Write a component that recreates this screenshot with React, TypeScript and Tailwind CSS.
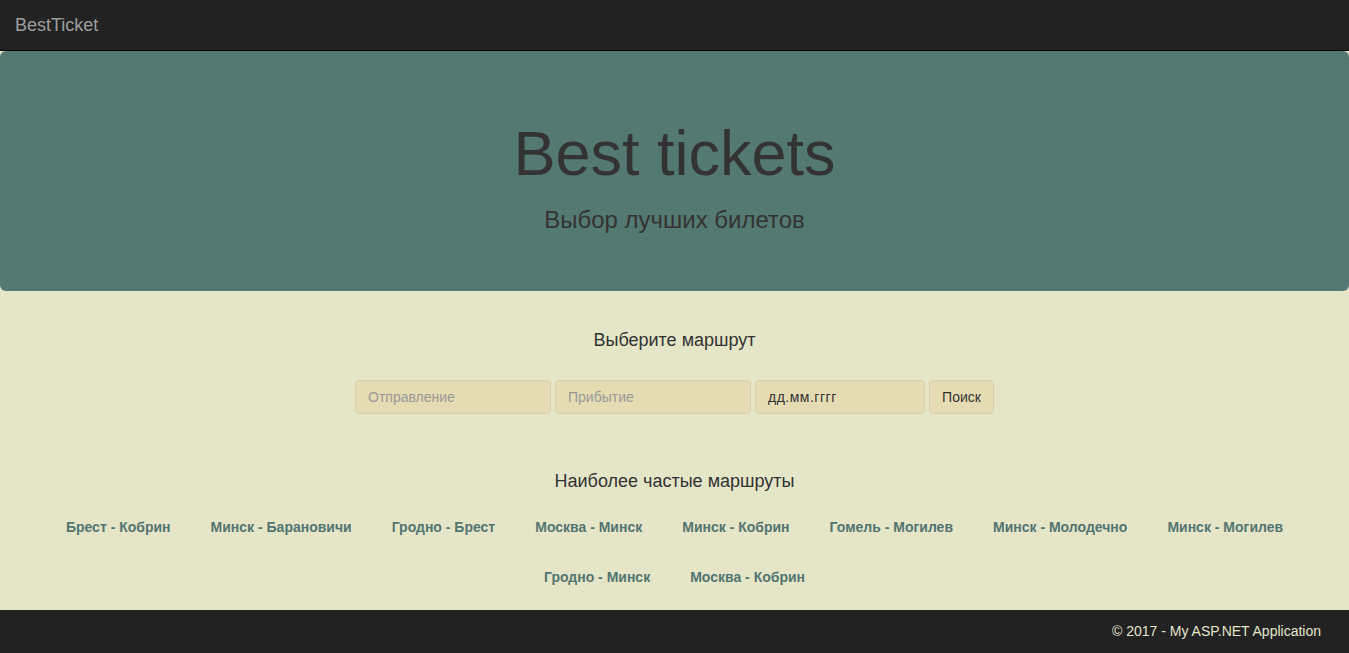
import React from "react";

const routes1 = [
  "Брест - Кобрин",
  "Минск - Барановичи",
  "Гродно - Брест",
  "Москва - Минск",
  "Минск - Кобрин",
  "Гомель - Могилев",
  "Минск - Молодечно",
  "Минск - Могилев",
];
const routes2 = ["Гродно - Минск", "Москва - Кобрин"];

const RouteLink: React.FC<{ name: string }> = ({ name }) => (
  <a href="#" className="text-[14px] font-bold text-[#537570] leading-5">
    {name}
  </a>
);

export default function App() {
  return (
    <div className="min-h-[653px] flex flex-col bg-[#e5e5c8] font-['Liberation_Sans',Arial,sans-serif] text-[#333]">
      {/* navbar */}
      <nav className="h-[51px] bg-[#222] border-b border-[#080808] flex items-center px-[15px]">
        <span className="text-[18px] text-[#9d9d9d]">BestTicket</span>
      </nav>

      {/* jumbotron */}
      <div className="bg-[#547972] rounded-[6px] h-[240px] flex flex-col items-center pt-[68px]">
        <h1 className="text-[63px] leading-[69px]">Best tickets</h1>
        <p className="text-[24px] leading-[34px] mt-[15px]">Выбор лучших билетов</p>
      </div>

      <main className="flex-1 flex flex-col items-center">
        <h4 className="text-[18px] leading-5 mt-[39px]">Выберите маршрут</h4>
        <form className="flex gap-1 mt-[30px]">
          <input
            placeholder="Отправление"
            className="w-[196px] h-[34px] px-3 text-[14px] bg-[#e5dcb3] border border-[#d6d0ac] rounded-[4px] placeholder:text-[#999] outline-none"
          />
          <input
            placeholder="Прибытие"
            className="w-[196px] h-[34px] px-3 text-[14px] bg-[#e5dcb3] border border-[#d6d0ac] rounded-[4px] placeholder:text-[#999] outline-none"
          />
          <input
            readOnly
            defaultValue="дд.мм.гггг"
            className="w-[170px] h-[34px] px-3 text-[14px] tracking-[0.5px] bg-[#e5dcb3] border border-[#d6d0ac] rounded-[4px] text-[#333] outline-none"
          />
          <button
            type="button"
            className="w-[65px] h-[34px] text-[14px] bg-[#e5dcb3] border border-[#d6d0ac] rounded-[4px] text-[#333]"
          >
            Поиск
          </button>
        </form>

        <h4 className="text-[18px] leading-5 mt-[57px]">Наиболее частые маршруты</h4>
        <div className="mt-[11px] flex flex-col items-center">
          <div className="h-[50px] flex items-center justify-center gap-10">
            {routes1.map((r) => (
              <RouteLink key={r} name={r} />
            ))}
          </div>
          <div className="h-[50px] flex items-center justify-center gap-10">
            {routes2.map((r) => (
              <RouteLink key={r} name={r} />
            ))}
          </div>
        </div>
      </main>

      <footer className="h-[43px] bg-[#222] flex items-center justify-end pr-7">
        <p className="text-[14px] text-[#e5e5c8]">© 2017 - My ASP.NET Application</p>
      </footer>
    </div>
  );
}
